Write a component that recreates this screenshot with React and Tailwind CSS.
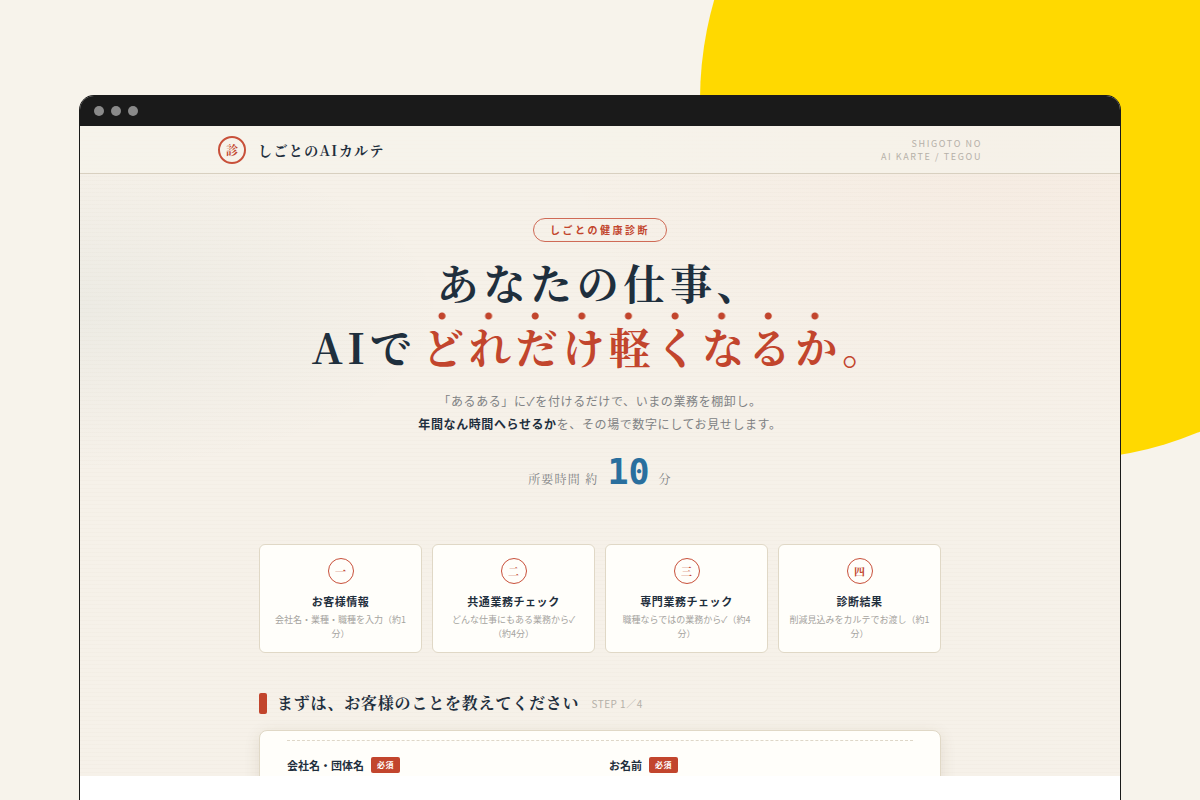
import React from 'react';

const STEPS = [
  { num: '一', title: 'お客様情報', desc: '会社名・業種・職種を入力（約1分）' },
  { num: '二', title: '共通業務チェック', desc: 'どんな仕事にもある業務から✓（約4分）' },
  { num: '三', title: '専門業務チェック', desc: '職種ならではの業務から✓（約4分）' },
  { num: '四', title: '診断結果', desc: '削減見込みをカルテでお渡し（約1分）' },
];

const FIELDS = [
  { id: 'company', label: '会社名・団体名' },
  { id: 'name', label: 'お名前' },
];

const SERIF = "font-['Noto_Serif_CJK_JP','Noto_Sans_CJK_JP',serif]";

const SiteHeader = () => (
  <header className="border-b border-[#d8d0c0] bg-[#f7f3eb]/70">
    <div className="mx-auto flex h-[47px] w-full max-w-[764px] items-center justify-between">
      <a href="#top" className="flex items-center gap-3">
        <span className={`flex h-7 w-7 items-center justify-center rounded-full border-2 border-[#c8503a] text-xs font-bold text-[#c2452d] ${SERIF}`}>
          診
        </span>
        <span className={`text-sm font-bold tracking-widest text-[#1f2f3d] ${SERIF}`}>しごとのAIカルテ</span>
      </a>
      <p className="text-right text-[9px] leading-[13px] tracking-[0.18em] text-[#b5b0a8]">
        SHIGOTO NO
        <br />
        AI KARTE / TEGOU
      </p>
    </div>
  </header>
);

const Hero = () => (
  <section className="flex flex-col items-center pt-11 text-center">
    <p className="rounded-full border border-[#cf6a56] px-4 text-[10px] font-bold leading-[22px] tracking-[0.25em] text-[#c2452d]">
      しごとの健康診断
    </p>
    <h1 className={`mt-2 text-[42px] font-bold leading-[64px] tracking-[0.11em] text-[#1f2f3d] ${SERIF}`}>
      あなたの仕事、
      <br />
      AIで
      <span className="ml-1.5 text-[#c2452d]">
        {/* one dot over each character, the full stop has none */}
        <span className="bg-[radial-gradient(circle_at_20px_4px,#c2452d_3px,transparent_4px)] bg-[length:1.11em_100%] bg-repeat-x pt-1">
          どれだけ軽くなるか
        </span>
        。
      </span>
    </h1>
    <p className="mt-[11px] text-xs leading-[23px] tracking-wider text-[#808284]">
      「あるある」に✓を付けるだけで、いまの業務を棚卸し。
      <br />
      <strong className="font-bold text-[#1f2f3d]">年間なん時間へらせるか</strong>
      を、その場で数字にしてお見せします。
    </p>
    <p className={`mt-[17px] flex items-baseline gap-[9px] text-xs tracking-widest text-[#808284] ${SERIF}`}>
      所要時間 約
      <span className="font-['DejaVu_Sans_Mono',monospace] text-[35px] font-bold leading-[40px] tracking-normal text-[#2a6f9e]">10</span>
      分
    </p>
  </section>
);

const StepCard = ({ num, title, desc }) => (
  <li className="flex flex-col items-center rounded-md border border-[#e0d8c6] bg-[#fffefa] px-2.5 pb-[11px] pt-[13px] text-center">
    <span className={`flex h-[26px] w-[26px] items-center justify-center rounded-full border border-[#c8503a] text-[11px] font-bold text-[#c2452d] ${SERIF}`}>
      {num}
    </span>
    <h3 className="mt-2 text-[11px] font-bold leading-[18px] tracking-wider text-[#1f2f3d]">{title}</h3>
    <p className="mt-[3px] text-[9px] leading-[14px] text-[#a5a39e]">{desc}</p>
  </li>
);

const Field = ({ id, label }) => (
  <div>
    <label htmlFor={id} className="flex items-center gap-[7px] text-[11px] font-bold leading-4 text-[#1f2f3d]">
      {label}
      <span className="rounded-xs bg-[#c2452d] px-1.5 text-[8px] leading-4 tracking-wider text-white">必須</span>
    </label>
    <input id={id} type="text" required className="mt-2 h-9 w-full rounded border border-[#d8d0c0] bg-white px-3 text-xs" />
  </div>
);

const App = () => (
  <div className="relative flex h-screen flex-col overflow-hidden bg-[#f7f3eb] px-20 pt-24 font-['Noto_Sans_CJK_JP','Noto_Sans',sans-serif]">
    <div className="absolute -right-[220px] -top-[260px] h-[720px] w-[720px] rounded-full bg-[#ffd900]"></div>

    {/* Browser window */}
    <div className="relative flex-1 overflow-hidden rounded-t-[14px] bg-white ring-1 ring-[#1a1a1a]">
      <div className="flex h-[30px] items-center gap-[7px] bg-[#1a1a1a] px-3.5">
        <span className="h-2.5 w-2.5 rounded-full bg-[#8a8a8a]"></span>
        <span className="h-2.5 w-2.5 rounded-full bg-[#8a8a8a]"></span>
        <span className="h-2.5 w-2.5 rounded-full bg-[#8a8a8a]"></span>
      </div>

      <div
        id="top"
        className="aspect-[16/10] overflow-hidden bg-[#f6f1e9] bg-[repeating-linear-gradient(0deg,transparent_0_3px,rgba(120,90,50,0.02)_3px_4px),radial-gradient(ellipse_at_90%_0%,rgba(240,130,90,0.05),transparent_35%),radial-gradient(ellipse_at_0%_28%,rgba(60,120,130,0.05),transparent_25%)]"
      >
        <SiteHeader />
        <main className="mx-auto w-full max-w-[682px]">
          <Hero />

          <ol className="mt-[52px] grid grid-cols-4 gap-2.5">
            {STEPS.map(step => (
              <StepCard key={step.num} {...step} />
            ))}
          </ol>

          <div className="mt-[38px] flex items-center">
            <span className="h-[21px] w-2 rounded-xs bg-[#c2452d]"></span>
            <h2 className={`ml-2.5 text-base font-bold leading-6 tracking-wider text-[#1f2f3d] ${SERIF}`}>
              まずは、お客様のことを教えてください
            </h2>
            <span className="ml-3 text-[10px] tracking-wider text-[#b5b0a8]">STEP 1／4</span>
          </div>

          <form className="mt-[15px] rounded-lg border border-[#e0d8c6] bg-[#fffefa] px-[27px] pb-6 pt-[9px] shadow-[0_4px_16px_rgba(90,70,30,0.12)]">
            <div className="grid grid-cols-2 gap-[18px] border-t border-dashed border-[#ded7c8] pt-4">
              {FIELDS.map(field => (
                <Field key={field.id} {...field} />
              ))}
            </div>
          </form>
        </main>
      </div>
    </div>
  </div>
);

export default App;
